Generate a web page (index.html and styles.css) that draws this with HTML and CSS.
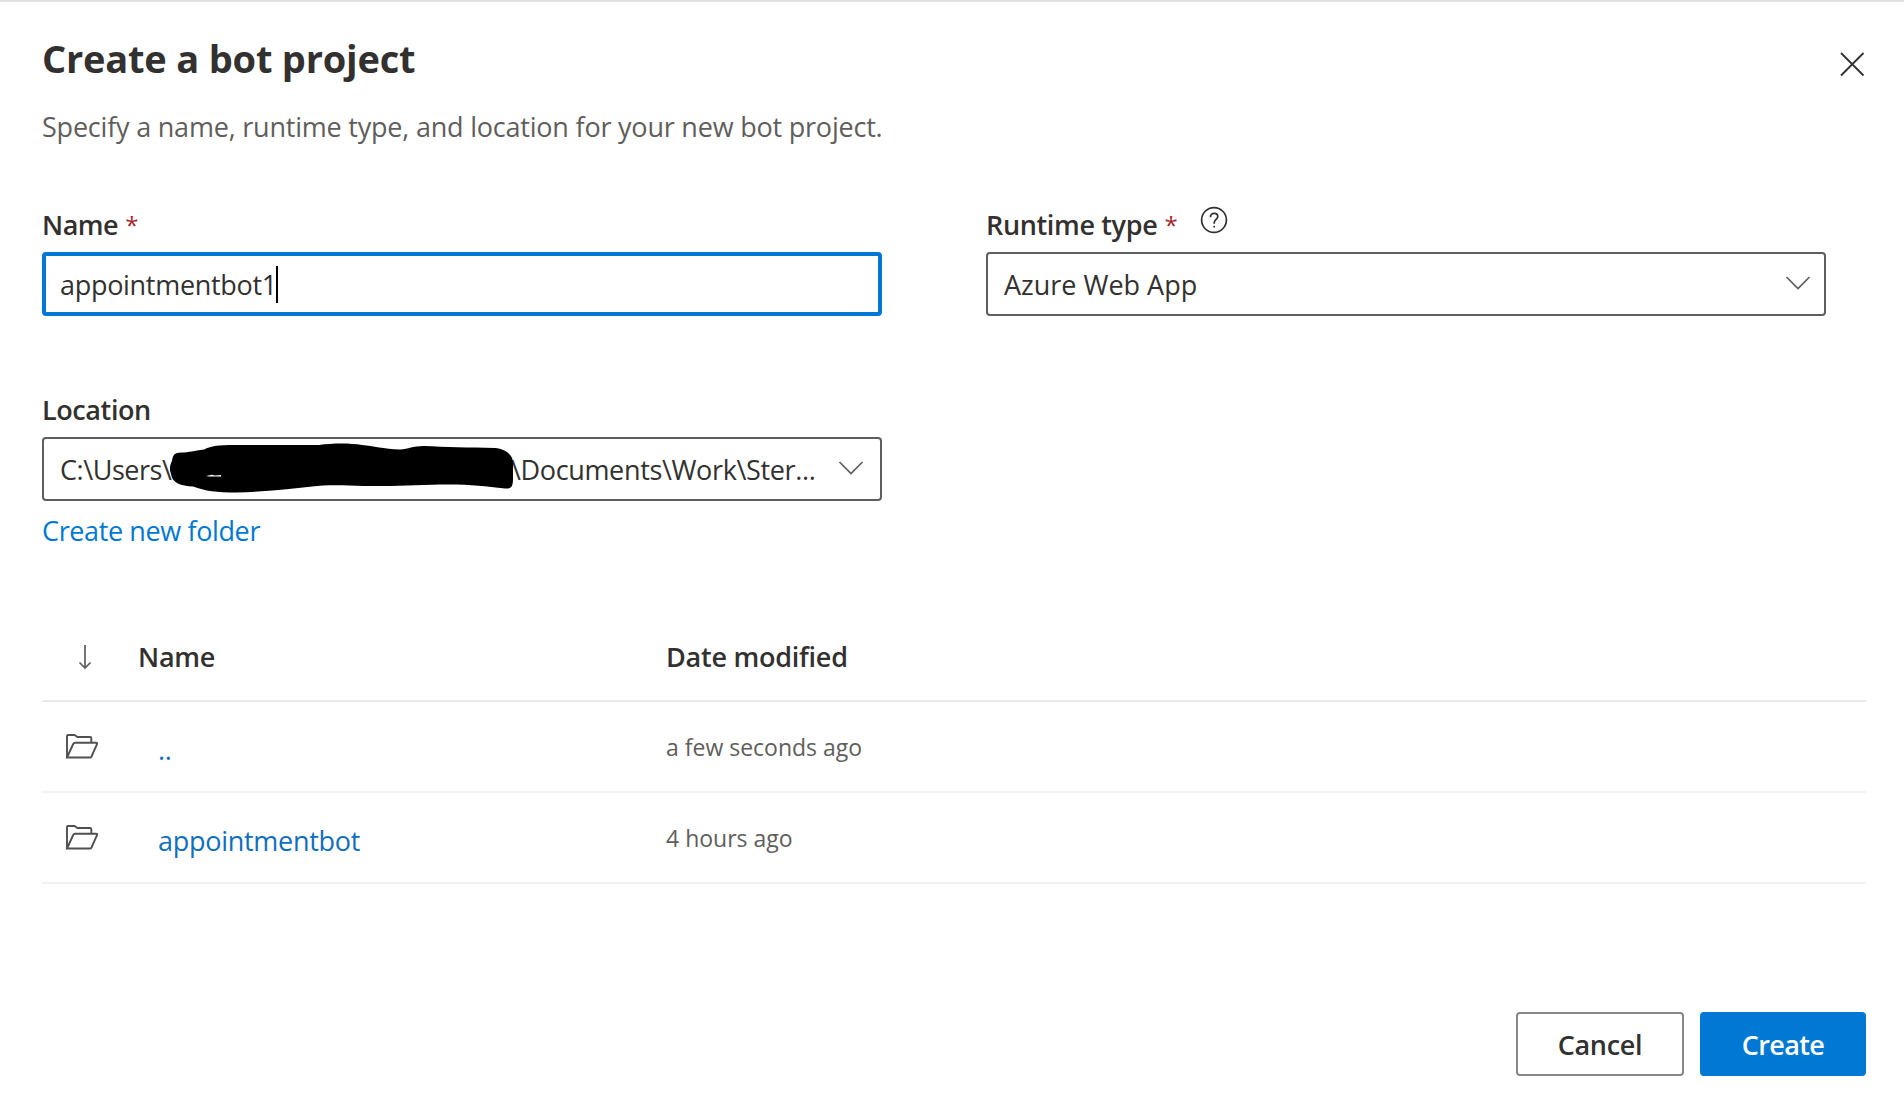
FILE: index.html
```
<!DOCTYPE html>
<html lang="en">
<head>
<meta charset="utf-8">
<title>Create a bot project</title>
<link rel="stylesheet" href="styles.css">
</head>
<body>
<main class="dialog">
  <header class="dialog-header">
    <div>
      <h1 class="title">Create a bot project</h1>
      <p class="subtitle">Specify a name, runtime type, and location for your new bot project.</p>
    </div>
    <svg class="close" width="26" height="26" viewBox="0 0 26 26"><path d="M2 2 24.500 24.500M24.500 2 2 24.500"/></svg>
  </header>

  <section class="form">
    <div class="field">
      <div class="label"><span class="label-name">Name</span><span class="required">*</span></div>
      <div class="control control-focused"><span class="name-value">appointmentbot1</span><i class="caret"></i></div>
    </div>
    <div class="field">
      <div class="label"><span class="label-runtime">Runtime type</span><span class="required">*</span>
        <svg class="help" width="28" height="28" viewBox="0 0 28 28"><circle cx="14" cy="14" r="12.400"/><path d="M10.400 11.200C10.400 8.700 12 7.300 14.200 7.300C16.400 7.300 17.800 8.600 17.800 10.600C17.800 13.400 14.200 13.600 14.200 16.800V17.800"/><path d="M14.200 19.800V21.600"/></svg>
      </div>
      <div class="control"><span>Azure Web App</span>
        <svg class="chevron" width="26" height="16" viewBox="0 0 26 16"><path d="M1.500 2 13 13.500 24.500 2"/></svg>
      </div>
    </div>
    <div class="field">
      <div class="label"><span class="label-location">Location</span></div>
      <div class="control path"><span class="path-start">C:\Users\</span><span class="path-end">\Documents\Work\Ster...</span>
        <svg class="redaction" width="346" height="52" viewBox="0 0 346 52"><path d="M3 18C4 11 6 10 12 9.500C20 9.500 25 7.500 35 6.500C43 2 55 2 72 2H150C164 0 181 0 193 2C205 3 214 6 231 6.500C240 6 243 3 255 3C276 4 300 4.500 326 5C337 6 344 12 344 20V35C344 43 343 46 336 45.500C315 43 299 41 271 41.500C245 42 220 43.500 195 43C175 42 157 41.500 143 43.500C120 46 94 49 67 49.500C48 49.500 36 48 24 43.500C12 43 3 40 2 31C0 26 1 22 3 18Z"/><path class="fleck" d="M37 33 43 31.800 46 32.600 52 32V33.600H40Z"/></svg>
        <svg class="chevron" width="26" height="16" viewBox="0 0 26 16"><path d="M1.500 2 13 13.500 24.500 2"/></svg>
      </div>
      <a class="link new-folder">Create new folder</a>
    </div>
  </section>

  <section class="files">
    <div class="row row-head">
      <svg class="arrow" width="16" height="26" viewBox="0 0 16 26"><path d="M8 1V24M2.500 18.500 8 24 13.500 18.500"/></svg>
      <span>Name</span>
      <span class="date-head">Date modified</span>
    </div>
    <div class="row">
      <svg class="folder" width="34" height="26" viewBox="0 0 34 26"><path d="M2 24.500V3Q2 2 3 2H9.500L12.500 4H25Q26.300 4 26.300 5.300V9.500M2 24.500 8.200 11Q8.800 9.800 10 9.800H31Q32.700 9.800 32 11.200L26.500 23.500Q26 24.500 25 24.500Z"/></svg>
      <a class="link file">..</a>
      <span class="date">a few seconds ago</span>
    </div>
    <div class="row">
      <svg class="folder" width="34" height="26" viewBox="0 0 34 26"><path d="M2 24.500V3Q2 2 3 2H9.500L12.500 4H25Q26.300 4 26.300 5.300V9.500M2 24.500 8.200 11Q8.800 9.800 10 9.800H31Q32.700 9.800 32 11.200L26.500 23.500Q26 24.500 25 24.500Z"/></svg>
      <a class="link file">appointmentbot</a>
      <span class="date">4 hours ago</span>
    </div>
  </section>

  <footer class="actions">
    <button class="button">Cancel</button>
    <button class="button button-primary">Create</button>
  </footer>
</main>
</body>
</html>
```
FILE: styles.css
```
* { box-sizing: border-box; }
body {
  margin: 0;
  background: #fff;
  color: #323130;
  font: 400 27px/36px "Open Sans", "Noto Sans", sans-serif;
}
svg { display: block; fill: none; stroke: #323130; flex: none; }
h1, p { margin: 0; }
.dialog {
  height: 1110px;
  padding: 30px 38px 34px 42px;
  border-top: 2px solid #e1e1e1;
  display: flex;
  flex-direction: column;
}
.dialog-header { display: flex; justify-content: space-between; }
.title { font-size: 38px; line-height: 52px; font-weight: 700; letter-spacing: -0.2px; }
.subtitle { margin-top: 25px; color: #605e5c; letter-spacing: -0.21px; }
.close { margin: 19px 1px 0 0; stroke-width: 1.8; }

.form {
  margin-top: 61px;
  display: grid;
  grid-template-columns: 840px 840px;
  column-gap: 104px;
  row-gap: 75px;
}
.label { height: 46px; display: flex; font-weight: 600; }
.label span { padding-top: 1px; }
.label-name { letter-spacing: -0.5px; }
.label-runtime { letter-spacing: -0.35px; }
.label-location { letter-spacing: -0.4px; }
.required { margin-left: 7px; color: #a4262c; font-weight: 400; font-size: 24px; }
.help { margin: 0 0 0 22px; stroke-width: 1.7; }
.control {
  position: relative;
  height: 64px;
  border: 2px solid #605e5c;
  border-radius: 4px;
  padding: 0 13px 0 16px;
  display: flex;
  align-items: center;
}
.control span { padding-top: 2px; }
.control-focused { border: 4px solid #0078d4; padding-left: 14px; }
.name-value { letter-spacing: -0.3px; }
.caret { width: 2px; height: 37px; margin-left: -1px; background: #000; }
.chevron { margin: 0 0 2px auto; stroke: #605e5c; stroke-width: 1.7; }
.path { padding-right: 16px; }
.path-start { width: 451px; letter-spacing: -0.45px; }
.path-end { letter-spacing: -0.35px; }
.redaction { position: absolute; left: 125px; top: 4px; fill: #000; stroke: none; }
.fleck { fill: #fff; }
.link { color: #106ebe; }
.new-folder { display: block; margin-top: 12px; letter-spacing: -0.38px; color: #0078d4; }

.files { margin: 62px 0 0; }
.row {
  height: 91px;
  display: grid;
  grid-template-columns: 96px 528px 1fr;
  align-items: center;
  border-bottom: 2px solid #f1f1f1;
  width: 1824px;
}
.row-head { font-weight: 600; letter-spacing: -0.25px; border-color: #eaeaea; }
.row-head span { padding-top: 2px; }
.arrow { margin: 3px 0 0 35px; stroke: #605e5c; stroke-width: 1.7; }
.folder { margin: 0 0 2px 23px; stroke: #505050; stroke-width: 1.9; }
.file { padding: 7px 0 0 20px; letter-spacing: -0.28px; }
.date { font-size: 23px; color: #605e5c; }

.actions { margin-top: auto; display: flex; gap: 16px; }
.button {
  width: 168px;
  height: 64px;
  border: 2px solid #8a8886;
  border-radius: 4px;
  background: #fff;
  color: #323130;
  font: 600 27px/36px "Open Sans", "Noto Sans", sans-serif;
  letter-spacing: -0.3px;
  padding: 2px 0 0;
}
.button:first-child { margin-left: auto; }
.button-primary { width: 166px; border-color: #0078d4; background: #0078d4; color: #fff; letter-spacing: -0.6px; }
```
